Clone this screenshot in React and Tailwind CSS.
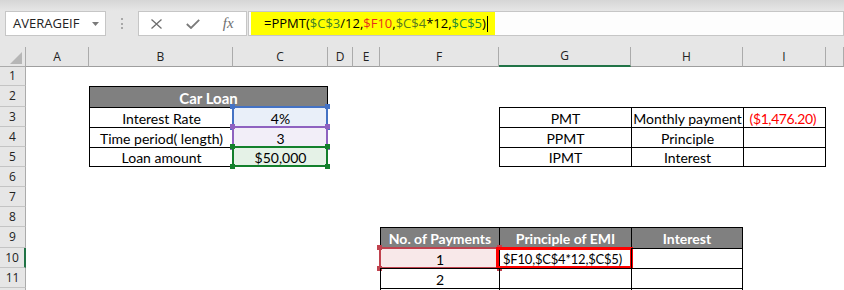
import React from "react";

const UI = { fontFamily: '"Open Sans", "Noto Sans", sans-serif' };
const CELL = { fontFamily: 'Lato, "Open Sans", sans-serif' };

const colHeads = [
  { k: "A" }, { k: "B" }, { k: "C" }, { k: "D" }, { k: "E" },
  { k: "F" }, { k: "G", sel: true }, { k: "H" }, { k: "I" }, { k: "" },
];

// row 12 is only a sliver at the bottom edge, so no number is shown for it
const rowHeads = [
  { n: 1, cls: "row-start-2" },
  { n: 2, cls: "row-start-3" },
  { n: 3, cls: "row-start-4" },
  { n: 4, cls: "row-start-5" },
  { n: 5, cls: "row-start-6" },
  { n: 6, cls: "row-start-7" },
  { n: 7, cls: "row-start-8" },
  { n: 8, cls: "row-start-9" },
  { n: 9, cls: "row-start-10" },
  { n: 10, cls: "row-start-11", sel: true },
  { n: 11, cls: "row-start-12" },
  { n: "", cls: "row-start-13" },
];

const Cell = ({ children, className = "" }) => (
  <div className={"relative flex items-center justify-center border-t border-l border-black leading-none pt-[2px] " + className}>
    {children}
  </div>
);

// coloured reference box that Excel draws round a cell while a formula is edited
const RefBox = ({ box, dot }) => (
  <div className={"absolute -left-[2px] -top-[2px] -right-[1px] -bottom-[1px] border-2 " + box}>
    <div className={"absolute -left-[4px] -top-[4px] w-[5px] h-[5px] " + dot} />
    <div className={"absolute -right-[4px] -top-[4px] w-[5px] h-[5px] " + dot} />
    <div className={"absolute -left-[4px] -bottom-[4px] w-[5px] h-[5px] " + dot} />
    <div className={"absolute -right-[4px] -bottom-[4px] w-[5px] h-[5px] " + dot} />
  </div>
);

const FormulaBar = () => (
  <div className="flex h-[25px] bg-[#e6e6e6]" style={UI}>
    <div className="ml-[5px] w-[101px] border border-[#c6c6c6] bg-white flex items-center pl-[7px] text-[13px] text-[#222]">
      AVERAGEIF
      <svg width="7" height="4" viewBox="0 0 7 4" className="ml-auto mr-[6px]">
        <polygon points="0,0 7,0 3.5,4" fill="#7a7a7a" />
      </svg>
    </div>
    <div className="w-[32px] flex flex-col items-center justify-center gap-[2.5px]">
      <div className="w-[2px] h-[2px] bg-[#a8a8a8]" />
      <div className="w-[2px] h-[2px] bg-[#a8a8a8]" />
      <div className="w-[2px] h-[2px] bg-[#a8a8a8]" />
    </div>
    <div className="w-[109px] border border-[#c6c6c6] bg-white flex items-center">
      <div className="w-[36px] flex justify-center">
        <svg width="11" height="10" viewBox="0 0 11 10">
          <path d="M0.5 0.5 L10.5 9.5 M10.5 0.5 L0.5 9.5" stroke="#6e6e6e" strokeWidth="1.3" fill="none" />
        </svg>
      </div>
      <div className="w-[36px] flex justify-center">
        <svg width="14" height="10" viewBox="0 0 14 10">
          <path d="M0.8 5 L5 9 L13.2 0.8" stroke="#7a7a7a" strokeWidth="1.8" fill="none" />
        </svg>
      </div>
      <div className="w-[36px] flex justify-center">
        <span className="italic text-[15px] text-[#6e6e6e] leading-none" style={{ fontFamily: '"Liberation Serif", serif' }}>fx</span>
      </div>
    </div>
    <div className="flex-1 ml-[1px] border border-[#c6c6c6] bg-[#fdfdfd] flex pl-[2px]">
      <div className="w-[244px] bg-[#ffff00] flex items-center pl-[13px] text-[13px] text-black">
        <span>=PPMT(</span>
        <span className="text-[#3f7f2a]">$C$3</span>
        <span>/12,</span>
        <span className="text-[#e8301c]">$F10</span>
        <span>,</span>
        <span className="text-[#5a7a20]">$C$4</span>
        <span>*12,</span>
        <span className="text-[#1e8a35]">$C$5</span>
        <span>)</span>
        <span className="ml-[1px] w-[1px] h-[16px] bg-black" />
      </div>
    </div>
  </div>
);

export default function App() {
  return (
    <div className="w-[844px] h-[290px] overflow-hidden bg-white">
      <div className="h-[11px] bg-gradient-to-b from-[#d6d6d6] to-[#e6e6e6]" />
      <FormulaBar />
      <div className="h-[11px] bg-[#e6e6e6]" />

      <div className="grid grid-cols-[26px_63px_144px_95px_25px_27px_119px_132px_112px_83px_1fr] grid-rows-[20px_19px_21px_20px_20px_20px_20px_20px_20px_21px_20px_20px_20px]">
        {/* corner */}
        <div className="col-start-1 row-start-1 bg-[#e6e6e6] border-r border-b border-[#ababab] flex items-end justify-end pr-[3px] pb-[2px]">
          <svg width="12" height="12" viewBox="0 0 12 12">
            <polygon points="12,0 12,12 0,12" fill="#b6b6b6" />
          </svg>
        </div>
        {colHeads.map((c, i) => (
          <div
            key={i}
            className={
              "row-start-1 bg-[#e6e6e6] flex items-center justify-center text-[12px] text-[#222] border-r border-[#ababab] " +
              (c.sel ? "border-b-2 border-b-[#217346]" : "border-b border-b-[#9e9e9e]")
            }
            style={UI}
          >
            {c.k}
          </div>
        ))}
        {rowHeads.map((r, i) => (
          <div
            key={i}
            className={
              "col-start-1 bg-[#e6e6e6] flex items-center justify-center text-[12px] text-[#222] border-b border-[#c4c4c4] " +
              r.cls + " " +
              (r.sel ? "border-r-2 border-r-[#217346]" : "border-r border-r-[#ababab]")
            }
            style={UI}
          >
            {r.n}
          </div>
        ))}

        {/* Car Loan */}
        <div className="col-start-3 col-span-2 row-start-3 row-span-4 grid grid-cols-[144px_1fr] grid-rows-[21px_20px_20px_1fr] border-r border-b border-black text-[14px] text-black" style={CELL}>
          <Cell className="col-span-2 bg-[#808080] text-white font-bold text-[15px]">Car Loan</Cell>
          <Cell>Interest Rate</Cell>
          <Cell className="bg-[#e9eff9]">
            4%
            <RefBox box="border-[#4472c4]" dot="bg-[#4472c4]" />
          </Cell>
          <Cell>Time period( length)</Cell>
          <Cell className="bg-[#f2eef8]">
            3
            <RefBox box="border-[#8e62c0]" dot="bg-[#8e62c0]" />
          </Cell>
          <Cell>Loan amount</Cell>
          <Cell className="bg-[#e5f2e7]">
            $50,000
            <RefBox box="border-[#13802c]" dot="bg-[#13802c]" />
          </Cell>
        </div>

        {/* PMT / PPMT / IPMT */}
        <div className="col-start-8 col-span-3 row-start-4 row-span-3 grid grid-cols-[132px_112px_1fr] grid-rows-[20px_20px_1fr] border-r border-b border-black text-[14px] text-black" style={CELL}>
          <Cell>PMT</Cell>
          <Cell>Monthly payment</Cell>
          <Cell className="justify-end pr-[9px] text-[#ff0000] tracking-[-0.4px]">($1,476.20)</Cell>
          <Cell>PPMT</Cell>
          <Cell>Principle</Cell>
          <Cell />
          <Cell>IPMT</Cell>
          <Cell>Interest</Cell>
          <Cell />
        </div>

        {/* payments */}
        <div className="col-start-7 col-span-3 row-start-10 row-span-4 grid grid-cols-[119px_132px_1fr] grid-rows-[21px_20px_20px_20px] border-r border-black text-[14px] text-black" style={CELL}>
          <Cell className="bg-[#808080] text-white font-bold">No. of Payments</Cell>
          <Cell className="bg-[#808080] text-white font-bold">Principle of EMI</Cell>
          <Cell className="bg-[#808080] text-white font-bold">Interest</Cell>
          <Cell className="bg-[#f8e8e9]">
            1
            <RefBox box="border-[#c0424e]" dot="bg-[#c0424e]" />
          </Cell>
          <Cell className="justify-start pl-[3px] text-[13px] tracking-[-0.2px]">
            $F10,$C$4*12,$C$5)
            <div className="absolute -left-[4px] -top-[2px] -right-[2px] -bottom-[1px] border-[3px] border-[#ff0000]" />
          </Cell>
          <Cell />
          <Cell>2</Cell>
          <Cell />
          <Cell />
          <Cell />
          <Cell />
          <Cell />
        </div>
      </div>
    </div>
  );
}
